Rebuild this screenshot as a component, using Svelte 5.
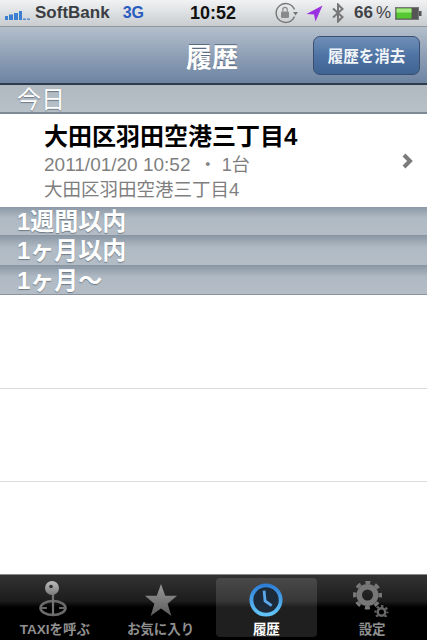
<script>
    let tabs = [
        { id: 'taxi', label: 'TAXIを呼ぶ' },
        { id: 'fav', label: 'お気に入り' },
        { id: 'history', label: '履歴', active: true },
        { id: 'settings', label: '設定' }
    ];
    let groups = ['1週間以内', '1ヶ月以内', '1ヶ月〜'];
</script>

<div class="phone">
    <div class="status">
        <svg class="signal" width="26" height="10" viewBox="0 0 26 10">
            <rect x="0" y="6" width="3" height="4" fill="#3b7fd0"/>
            <rect x="4" y="4.5" width="4" height="5.5" fill="#3b7fd0"/>
            <rect x="9" y="3" width="4" height="7" fill="#3b7fd0"/>
            <rect x="14" y="1" width="3" height="9" fill="#3b7fd0"/>
            <rect x="18" y="8.5" width="3" height="1.5" fill="#5a8fd0"/>
            <rect x="22" y="8.5" width="3" height="1.5" fill="#5a8fd0"/>
        </svg>
        <span class="carrier">SoftBank</span>
        <span class="net">3G</span>
        <span class="time">10:52</span>
        <svg class="lock" width="24" height="22" viewBox="0 0 24 22" fill="none">
            <path d="M20.5 14.5 A9.5 9.5 0 1 1 20.5 7.5" stroke="#777" stroke-width="1.4"/>
            <path d="M19 10 L24 10 L21.5 13.5 Z" fill="#777"/>
            <rect x="7" y="9.5" width="8" height="6.5" rx="1" fill="#8a8a8a"/>
            <path d="M8.8 9.5 V7.5 a2.2 2.2 0 0 1 4.4 0 V9.5" stroke="#8a8a8a" stroke-width="1.2"/>
        </svg>
        <svg class="loc" width="17" height="17" viewBox="0 0 17 17"><path d="M16.5 0.5 L0.5 9 L8 9.5 L9.5 16.5 Z" fill="#9b30e0"/></svg>
        <svg class="bt" width="12" height="20" viewBox="0 0 12 20" fill="none"><path d="M1 5.5 L10.5 14 L6 18.5 V1.5 L10.5 6 L1 14.5" stroke="#777" stroke-width="2"/></svg>
        <span class="pct">66<small>%</small></span>
        <svg class="batt" width="27" height="13" viewBox="0 0 27 13">
            <rect x="0.5" y="0.5" width="23" height="12" fill="#555" stroke="#777"/>
            <rect x="1.5" y="1.5" width="15" height="10" fill="#55c832"/>
            <rect x="1.5" y="1.5" width="15" height="4" fill="#a2ea7e"/>
            <rect x="24" y="4" width="2.5" height="5" fill="#555"/>
        </svg>
    </div>

    <div class="nav">
        <h1>履歴</h1>
        <button class="clear">履歴を消去</button>
    </div>

    <div class="list">
        <div class="section today">今日</div>
        <div class="row">
            <div class="info">
                <div class="title">大田区羽田空港三丁目4</div>
                <div class="sub date">2011/01/20 10:52 <span class="count">・ 1台</span></div>
                <div class="sub">大田区羽田空港三丁目4</div>
            </div>
            <svg class="chev" width="12" height="16" viewBox="0 0 12 16" fill="none"><path d="M3 2 L9 8 L3 14" stroke="#7b7b7b" stroke-width="4"/></svg>
        </div>
        {#each groups as g}
            <div class="section">{g}</div>
        {/each}
        <div class="empty"></div>
        <div class="empty"></div>
    </div>

    <div class="tabbar">
        {#each tabs as t}
            <div class="tab" class:active={t.active}>
                {#if t.id === 'taxi'}
                    <svg class="taxi" width="34" height="36" viewBox="0 0 34 36" fill="none">
                        <defs><linearGradient id="g1" x1="0" y1="0" x2="0" y2="1"><stop offset="0" stop-color="#bcbcbc"/><stop offset="1" stop-color="#7a7a7a"/></linearGradient></defs>
                        <ellipse cx="15" cy="27" rx="12.5" ry="7" stroke="#6a6a6a" stroke-width="2.6"/>
                        <path d="M15 12 V34" stroke="#747474" stroke-width="2.2"/>
                        <path d="M3 27 H9 M21 27 H27" stroke="#666" stroke-width="2"/>
                        <circle cx="14" cy="7" r="7" fill="url(#g1)"/>
                        <circle cx="13" cy="5.5" r="1.8" fill="#2a2a2a"/>
                    </svg>
                {:else if t.id === 'fav'}
                    <svg width="36" height="34" viewBox="0 0 36 36">
                        <defs><linearGradient id="g2" x1="0" y1="0" x2="0" y2="1"><stop offset="0" stop-color="#9a9a9a"/><stop offset="1" stop-color="#5a5a5a"/></linearGradient></defs>
                        <path d="M18 1 L22.5 13.5 L35 13.5 L25 22 L29 35 L18 27 L7 35 L11 22 L1 13.5 L13.5 13.5 Z" fill="url(#g2)"/>
                    </svg>
                {:else if t.id === 'history'}
                    <svg width="34" height="34" viewBox="0 0 36 36" fill="none">
                        <defs><linearGradient id="g3" x1="0" y1="0" x2="0" y2="1"><stop offset="0" stop-color="#2f7fd8"/><stop offset="1" stop-color="#62c4f6"/></linearGradient></defs>
                        <circle cx="18" cy="18" r="15.5" fill="#1c2a3a" stroke="url(#g3)" stroke-width="4"/>
                        <path d="M16 8 L17 19 L24 24" stroke="#5aa8ea" stroke-width="3"/>
                    </svg>
                {:else}
                    <svg width="38" height="36" viewBox="0 0 38 36" fill="none">
                        <defs><linearGradient id="g4" x1="0" y1="0" x2="0" y2="1"><stop offset="0" stop-color="#909090"/><stop offset="1" stop-color="#646464"/></linearGradient></defs>
                        <circle cx="14.5" cy="14" r="8.25" stroke="#777" stroke-width="5.5"/>
                        <circle cx="14.5" cy="14" r="12.75" stroke="#777" stroke-width="3.5" stroke-dasharray="5 5.01" stroke-dashoffset="2.5"/>
                        <circle cx="28.5" cy="31" r="3.75" stroke="#686868" stroke-width="2.5"/>
                        <circle cx="28.5" cy="31" r="6" stroke="#686868" stroke-width="2" stroke-dasharray="2.35 2.36" stroke-dashoffset="1.18"/>
                    </svg>
                {/if}
                <span>{t.label}</span>
            </div>
        {/each}
    </div>
</div>

<style>
    :global(body) {
        margin: 0;
        background: #fff;
    }
    .phone {
        width: 427px;
        height: 640px;
        display: flex;
        flex-direction: column;
        overflow: hidden;
        font-family: "Liberation Sans", "Noto Sans CJK JP", sans-serif;
    }
    .status {
        height: 27px;
        flex: none;
        display: flex;
        align-items: center;
        padding: 0 5px 0 5px;
        box-sizing: border-box;
        background: linear-gradient(#f1f2f3, #c9cdd0);
        border-bottom: 1px solid #8f9498;
        position: relative;
    }
    .signal { margin-right: 4px; margin-top: 4px; }
    .carrier { font-size: 17px; font-weight: bold; color: #3a3d42; }
    .net { font-size: 16px; font-weight: bold; color: #2a5cc0; margin-left: 13px; }
    .time {
        position: absolute;
        left: 190px;
        font-size: 18px;
        font-weight: bold;
        color: #111;
    }
    .lock { margin-left: auto; }
    .loc { margin-left: 8px; }
    .bt { margin-left: 9px; }
    .pct { font-size: 17px; font-weight: bold; color: #3f4246; margin-left: 10px; }
    .pct small { font-size: 17px; font-weight: normal; margin-left: 3px; }
    .batt { margin-left: 4px; }
    .nav {
        height: 58px;
        flex: none;
        box-sizing: border-box;
        display: flex;
        align-items: center;
        justify-content: flex-end;
        padding-right: 7px;
        position: relative;
        background: linear-gradient(#b4bfcc, #8fa0b6 50%, #6d84a2);
        border-bottom: 2px solid #2d3a4a;
    }
    h1 {
        position: absolute;
        left: 0;
        right: 3px;
        margin: 0;
        text-align: center;
        font-size: 26px;
        font-weight: bold;
        color: #fff;
        text-shadow: 0 -1px 0 #5a6a80;
    }
    .clear {
        width: 107px;
        height: 39px;
        padding: 0;
        border: 1px solid #3a4f70;
        border-radius: 7px;
        background: linear-gradient(#6f8fb8, #4f74a4 50%, #3f6494);
        color: #f2f5f8;
        font-family: inherit;
        font-size: 15.5px;
        font-weight: bold;
        position: relative;
    }
    .list {
        flex: 1;
        min-height: 0;
        background: #fff;
    }
    .section {
        height: 29.33px;
        box-sizing: border-box;
        padding-left: 17px;
        line-height: 30px;
        font-size: 24px;
        font-weight: bold;
        color: #fff;
        text-shadow: 0 1px 1px #6d7985;
        background: linear-gradient(#8c99a6, #b0bac4 40%, #b4bdc6);
        border-bottom: 1px solid #8a949e;
    }
    .today {
        height: 29px;
        font-weight: normal;
        background: linear-gradient(#b0b8c0, #b8c0c8);
        border-bottom: 2px solid #7e8a96;
    }
    .row {
        height: 93px;
        box-sizing: border-box;
        display: flex;
        align-items: center;
        padding: 0 14px 0 44px;
        background: #fff;
    }
    .info { flex: 1; padding-top: 1px; }
    .title { font-size: 24px; line-height: 31px; font-weight: bold; color: #000; }
    .sub { font-size: 18.5px; line-height: 24px; color: #7f7f7f; }
    .date { font-size: 19px; line-height: 25px; }
    .count { font-size: 18px; margin-left: 3px; }
    .empty {
        height: 93px;
        box-sizing: border-box;
        border-bottom: 1px solid #dcdcdc;
    }
    .section + .empty { height: 94px; }
    .tabbar {
        height: 66px;
        flex: none;
        box-sizing: border-box;
        display: grid;
        grid-template-columns: repeat(4, 1fr);
        padding: 3px 4px 3px;
        gap: 4px;
        border-top: 1px solid #888;
        background: linear-gradient(#333, #1c1c1c 40%, #000 50%, #000);
    }
    .tab {
        display: flex;
        flex-direction: column;
        align-items: center;
        justify-content: flex-end;
        gap: 6px;
        border-radius: 4px;
    }
    .tab span {
        font-size: 13.5px;
        line-height: 14px;
        font-weight: bold;
        color: #8f8f8f;
    }
    .tab.active { background: rgba(255, 255, 255, 0.12); }
    .tab.active span { color: #fff; }
</style>
